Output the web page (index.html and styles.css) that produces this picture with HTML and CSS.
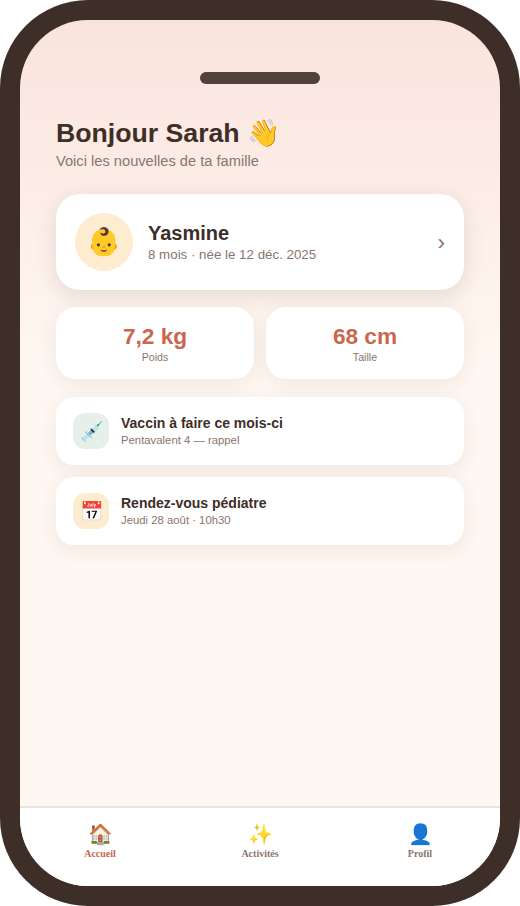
FILE: index.html
```html
<!DOCTYPE html>
<html lang="fr">
<head>
<meta charset="utf-8">
<title>Accueil</title>
<link rel="stylesheet" href="styles.css">
</head>
<body>
<div class="phone">
  <div class="screen">
    <div class="notch"></div>
    <main class="content">
      <h1>Bonjour Sarah 👋</h1>
      <p class="subtitle">Voici les nouvelles de ta famille</p>
      <section class="card child">
        <div class="avatar">👶</div>
        <div class="child-text">
          <h2>Yasmine</h2>
          <p>8 mois · née le 12 déc. 2025</p>
        </div>
        <span class="chevron">›</span>
      </section>
      <section class="stats">
        <div class="card stat"><strong>7,2 kg</strong><span>Poids</span></div>
        <div class="card stat"><strong>68 cm</strong><span>Taille</span></div>
      </section>
      <section class="card item">
        <div class="icon mint">💉</div>
        <div><h3>Vaccin à faire ce mois-ci</h3><p>Pentavalent 4 — rappel</p></div>
      </section>
      <section class="card item">
        <div class="icon sand">📅</div>
        <div><h3>Rendez-vous pédiatre</h3><p>Jeudi 28 août · 10h30</p></div>
      </section>
    </main>
    <nav class="tabs">
      <div class="tab active"><span class="glyph">🏠</span><span>Accueil</span></div>
      <div class="tab"><span class="glyph">✨</span><span>Activités</span></div>
      <div class="tab"><span class="glyph">👤</span><span>Profil</span></div>
    </nav>
  </div>
</div>
</body>
</html>
```
FILE: styles.css
```css
* { box-sizing: border-box; margin: 0; padding: 0; }
body { background: #fff; font-family: "Liberation Serif", serif; color: #3d2e28; }
.phone { width: 520px; height: 906px; padding: 20px; border-radius: 88px; background: #3d2e28; }
.screen {
  height: 866px; border-radius: 68px; overflow: hidden;
  display: flex; flex-direction: column;
  background: linear-gradient(180deg, #fae3dd 0%, #fff7f1 40%, #fff7f1 100%);
}
.notch { width: 120px; height: 12px; margin: 52px auto 0; border-radius: 6px; background: #50413a; flex: none; }
.content { flex: 1; padding: 33px 36px 0; font-family: "Liberation Sans", Arial, sans-serif; }
h1 { font-size: 26.67px; line-height: 32px; }
.subtitle { font-size: 14.67px; line-height: 17px; margin-top: 4px; color: #8a756c; }
.card { background: #fff; border-radius: 20px; box-shadow: 0 6px 20px rgba(61, 46, 40, 0.08); }
.child { display: flex; align-items: center; height: 96px; margin-top: 24px; padding: 0 19px; border-radius: 24px; box-shadow: 0 6px 22px rgba(61, 46, 40, 0.13); }
.avatar { width: 58px; height: 58px; margin-right: 15px; border-radius: 50%; background: #fdecd0; display: flex; align-items: center; justify-content: center; font-size: 27px; }
.child-text { flex: 1; }
h2 { font-size: 20px; line-height: 23px; }
.child p { font-size: 13.33px; line-height: 16px; margin-top: 2px; color: #8a756c; }
.chevron { font-size: 22.67px; line-height: 26px; color: #8a756c; }
.stats { display: grid; grid-template-columns: 1fr 1fr; gap: 12px; margin: 17px 0 18px; }
.stat { height: 72px; padding-top: 16px; text-align: center; display: flex; flex-direction: column; }
.stat strong { font-size: 22.67px; line-height: 27px; color: #c8674d; }
.stat span { font-size: 10.67px; line-height: 13px; margin-top: 1px; color: #8a756c; }
.item { display: flex; align-items: center; gap: 12px; height: 68px; padding: 0 17px; margin-bottom: 12px; border-radius: 18px; }
.icon { width: 36px; height: 36px; border-radius: 12px; display: flex; align-items: center; justify-content: center; padding-left: 1px; font-size: 19px; }
.mint { background: #e6f0e9; }
.sand { background: #fdecd0; }
h3 { font-size: 14px; line-height: 16px; margin-top: -1px; }
.item p { font-size: 11.33px; line-height: 13px; margin-top: 3px; color: #8a756c; }
.tabs { height: 80px; display: grid; grid-template-columns: repeat(3, 1fr); background: #fff; border-top: 2px solid #f0e2da; }
.tab { display: flex; flex-direction: column; align-items: center; padding-top: 13px; font-size: 10px; line-height: 12px; font-weight: 700; color: #8a756c; }
.tab.active { color: #c8674d; }
.glyph { font-size: 20px; line-height: 26px; margin-bottom: 1px; font-weight: 400; }
```
